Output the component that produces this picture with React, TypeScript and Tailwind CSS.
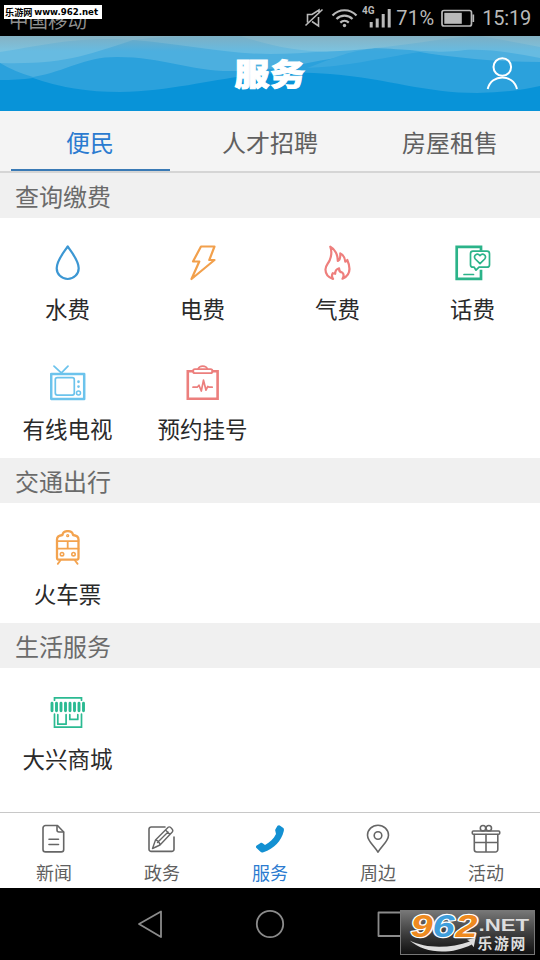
import type { ReactNode } from "react";
import clsx from "clsx";

const tabs = ["便民", "人才招聘", "房屋租售"];

type Item = { label: string; icon: ReactNode };

const sections: { title: string; items: Item[] }[] = [
  {
    title: "查询缴费",
    items: [
      { label: "水费", icon: <WaterIcon /> },
      { label: "电费", icon: <BoltIcon /> },
      { label: "气费", icon: <FlameIcon /> },
      { label: "话费", icon: <PhoneBillIcon /> },
      { label: "有线电视", icon: <TvIcon /> },
      { label: "预约挂号", icon: <ClipboardIcon /> },
    ],
  },
  { title: "交通出行", items: [{ label: "火车票", icon: <TrainIcon /> }] },
  { title: "生活服务", items: [{ label: "大兴商城", icon: <ShopIcon /> }] },
];

const navItems: Item[] = [
  { label: "新闻", icon: <NewsIcon /> },
  { label: "政务", icon: <EditIcon /> },
  { label: "服务", icon: <CallIcon /> },
  { label: "周边", icon: <PinIcon /> },
  { label: "活动", icon: <GiftIcon /> },
];

function Icon({ color, width = 1.8, children }: { color: string; width?: number; children: ReactNode }) {
  return (
    <svg
      viewBox="0.5 0.3 36 36"
      className="w-9 h-9"
      fill="none"
      stroke={color}
      strokeWidth={width}
      strokeLinejoin="round"
      strokeLinecap="round"
    >
      {children}
    </svg>
  );
}

function WaterIcon() {
  return (
    <Icon color="#3c97d3" width={2.2}>
      <path d="M18.2 1.7C15 7 7.2 15.300 7.200 23.500a11 10.800 0 0 0 22 0C29.200 15.300 21.400 7 18.200 1.700Z" />
    </Icon>
  );
}

function BoltIcon() {
  return (
    <Icon color="#f2a04c" width={2.2}>
      <path d="M16.500 1.800H30L24.800 15.300H30L7 34.300 14.800 16.800H8.500Z" />
    </Icon>
  );
}

function FlameIcon() {
  return (
    <Icon color="#ee7f7d" width={2.2}>
      <path d="M13.500 34.200C8.500 32.500 5.800 29 6 24.500c.2-4 2.600-5.300 4.400-9.500C12 11 12.200 6 10.800 2c4.700 2.300 7.600 8.200 7.500 14.300 1.900-.8 2.700-4 2.500-7.600 3.400 1.800 4.700 4.300 5 8.300.8-.2 1.400-.8 2-1.700 3.200 7.300 4.200 14.700-4.800 18.700 1.500-2.500 1.400-4.700-.2-6.200-2.200-.2-3.400-1.500-3.200-4.200-3.500 1-4 3.200-3.900 5.500l-2.500-.6c-1.100 2-.8 4 .3 5.700Z" />
    </Icon>
  );
}

function PhoneBillIcon() {
  return (
    <Icon color="#2bb389" width={1.7}>
      <path d="M26.500 6V2.200H2.200v32H26.500V25" strokeWidth="2.700" strokeLinejoin="miter" strokeLinecap="butt" />
      <path d="M9.500 29.800h9.500" />
      <path d="M18.500 6.500h14a2.500 2.500 0 0 1 2.500 2.500v11a2.500 2.500 0 0 1-2.500 2.500H24.500l-3 3-1.800-3h-1.200A2.500 2.500 0 0 1 16 20V9a2.500 2.500 0 0 1 2.500-2.500Z" fill="#fff" />
      <path d="m25.500 19-4.700-4.700c-2.600-3.300 1.800-6.700 4.700-3.300 2.900-3.400 7.300 0 4.700 3.300Z" />
    </Icon>
  );
}

function TvIcon() {
  return (
    <Icon color="#6cc3ec" width={1.7}>
      <path d="m4.500 1.500 7 6.500m7-6.500-6.300 6.500" />
      <rect x="1.700" y="9.200" width="33" height="25" strokeWidth="2.500" />
      <rect x="5.800" y="13" width="19" height="17.400" rx="2" />
      <circle cx="29" cy="28.200" r="2" strokeWidth="1.500" />
      <path d="M29 17v.1m0 4.700v.1" strokeWidth="2.700" />
    </Icon>
  );
}

function ClipboardIcon() {
  return (
    <Icon color="#ec7f7d" width={1.7}>
      <path d="M8.500 6.500H3.300v27.500h29.800V6.500h-5" strokeWidth="2.600" strokeLinejoin="miter" />
      <path d="M13.500 4.500C15 .5 21.500 .5 23 4.500" />
      <rect x="8.500" y="4.500" width="19.500" height="4" rx="2" />
      <path d="M8.500 22.500h4.200l1.800-2 2.300 5.800 2.200-10.800 2.500 10 1.800-3.800 1.400.8h3" />
    </Icon>
  );
}

function TrainIcon() {
  return (
    <Icon color="#f3a34f" width={1.8}>
      <path d="M7.500 28V9.800c0-3 1.500-4 5.500-4.500.5-5.200 10-5.200 10.500 0 4 .5 5.500 1.500 5.500 4.500V28a2 2 0 0 1-2 2H9.500a2 2 0 0 1-2-2Z" strokeWidth="2.300" />
      <path d="M8 11.400h21M8 19h21M18.200 11.800v7" />
      <circle cx="12.500" cy="24.500" r="1.700" strokeWidth="1.600" />
      <circle cx="24" cy="24.500" r="1.700" strokeWidth="1.600" />
      <circle cx="18.200" cy="6" r="1" strokeWidth="1.300" />
      <path d="m11 30.500-2.700 3.700m17-3.700 2.800 3.700" />
    </Icon>
  );
}

function ShopIcon() {
  return (
    <Icon color="#2bba92" width={1.7}>
      <path d="M5 5.500V3.200h27V5.500M5 19.500v13h27v-13" strokeLinejoin="miter" />
      <path
        d="M2.500 8.500v7.500M7 8.500v7.500M11.500 8.500v7.500M16 8.500v7.500M20.500 8.500v7.500M25 8.500v7.500M29.500 8.500v7.500M34 8.500v7.500"
        strokeWidth="2.900"
      />
      <path d="M8.300 20v9.500h8.300V20M20.300 20v4.700h8V20" />
    </Icon>
  );
}

function NavIcon({ children }: { children: ReactNode }) {
  return (
    <svg
      viewBox="0 0 30 30"
      className="w-[30px] h-[30px]"
      fill="none"
      stroke="#666"
      strokeWidth="1.600"
      strokeLinejoin="round"
      strokeLinecap="round"
    >
      {children}
    </svg>
  );
}

function NewsIcon() {
  return (
    <NavIcon>
      <path d="M18.500 1.500H6.500A2.500 2.500 0 0 0 4 4v21.400a2.500 2.500 0 0 0 2.500 2.500h15.700a2.500 2.500 0 0 0 2.500-2.500V8Z" />
      <path d="M18 1.800V6a2 2 0 0 0 2 2h4.500M10 15.300h9.500M10 20.500h9.500" />
    </NavIcon>
  );
}

function EditIcon() {
  return (
    <NavIcon>
      <path d="M18 3H4.200A2.200 2.200 0 0 0 2 5.200v20a2.200 2.200 0 0 0 2.200 2.200h20.600a2.200 2.200 0 0 0 2.200-2.200V13" />
      <path d="m5.500 24.500 3-8.500L21.200 3.200c1.500-1.200 5.700 2.300 4.300 4.500L13 21ZM8.500 16c2.500.5 4 2 4.500 5M18.500 5.900l4.500 4.500M21 8.100 10.500 18.500" strokeWidth="1.400" />
    </NavIcon>
  );
}

function CallIcon() {
  return (
    <svg viewBox="0 0 30 30" className="w-[30px] h-[30px]" fill="#1390d2">
      <path d="M22.500 1.800c1-.9 2-.9 3 .1l2.800 2.200c.7.700.8 1.500.5 2.800-2.500 10-9.500 17.700-20.400 21.300-1.500.4-2.300.2-3.200-.7l-3.700-3.500c-.8-.9-.7-1.800.2-2.600l3.500-2.200c1.100-.6 1.700-.5 2.800.3l2 1.400c5-2.400 8.600-6 11-10.800l-.6-2.800c-.4-1.200-.2-1.800.5-2.800Z" />
    </svg>
  );
}

function PinIcon() {
  return (
    <NavIcon>
      <path d="M15 28.200C11.500 22.200 4.500 17.200 4.500 11.200a10.500 10 0 0 1 21 0c0 6-7 11-10.500 17Z" />
      <circle cx="15" cy="11.500" r="3.800" />
    </NavIcon>
  );
}

function GiftIcon() {
  return (
    <NavIcon>
      <rect x="1.300" y="7" width="27.400" height="3.300" rx="1" />
      <path d="M3.300 10.500V25.500A2.500 2.500 0 0 0 5.800 28h18.500a2.500 2.500 0 0 0 2.500-2.500V10.500M3.500 18.500h23M15 10.500v17.500" />
      <circle cx="12" cy="4.200" r="2.700" />
      <circle cx="17.800" cy="4.200" r="2.700" />
    </NavIcon>
  );
}

function StatusBar() {
  return (
    <div className="relative h-9 bg-black text-[#b9b9b9] flex items-center justify-between pl-[9px] pr-[9px]">
      <span className="text-[19.500px] leading-none pt-[3px] text-[#8f8f8f]">中国移动</span>
      <div className="absolute left-1 top-[5px] w-[98px] h-[14px] bg-white text-black font-bold text-[9.200px] leading-[14px] whitespace-nowrap pl-px flex justify-between pr-[4px]">
        <span>乐游网</span>
        <span className="font-['DejaVu_Sans'] text-[8.600px]">www.962.net</span>
      </div>
      <div className="flex items-center font-['Roboto'] text-[20px] leading-9">
        <svg viewBox="0 0 90 36" className="w-[90px] h-9" fill="none" stroke="#b9b9b9" strokeWidth="1.600">
          <path d="m21.500 9.500-17 16M6.500 22.500v-8h4.500l7-4.500v3.500M11 21.500l6.500 4.500V17" />
          <path d="M31.500 15.500c6.500-7 17.500-7 24 0M35.500 19c4.500-4.500 11.500-4.500 16 0M39.300 22.600c2.500-2.300 6-2.300 8.500 0" strokeWidth="2.200" />
          <circle cx="43.500" cy="25.500" r="1.700" fill="#b9b9b9" stroke="none" />
          <path d="M70.200 22v5.500M76.200 18.500v9M82.200 14v13.500M88.200 9v18.500" strokeWidth="3" />
          <text x="61" y="13.500" fontSize="10" fontWeight="bold" fontFamily="Roboto" fill="#b9b9b9" stroke="none">
            4G
          </text>
        </svg>
        <span className="ml-[5px] w-[39px] tracking-[0.400px]">71%</span>
        <svg viewBox="0 0 34 18" className="w-[34px] h-[18px] ml-[6px]" fill="none" stroke="#b9b9b9" strokeWidth="1.700">
          <rect x="1" y="1.500" width="29.500" height="15.500" rx="2" />
          <rect x="3.300" y="3.800" width="17.500" height="11" fill="#b9b9b9" stroke="none" />
          <path d="M32.300 5.500v7.500" />
        </svg>
        <span className="ml-[7px] tracking-[-0.200px]">15:19</span>
      </div>
    </div>
  );
}

function Header() {
  return (
    <header className="relative h-[75px] bg-[#0893d8] flex items-center justify-center">
      <svg viewBox="0 0 540 75" className="absolute inset-0 w-full h-full">
        <defs>
          <linearGradient id="shade" x1="0" y1="0" x2="0" y2="1">
            <stop offset="0" stopColor="#8ba6b0" stopOpacity=".6" />
            <stop offset="1" stopColor="#8ba6b0" stopOpacity="0" />
          </linearGradient>
        </defs>
        <path d="M0 0V44Q18 44 33 42Q72 56 120 56C170 55 210 44 245 40C275 36 305 36 330 38C390 43 425 57 477 57Q515 56 540 50V0Z" fill="#2ba1dc" />
        <path d="M0 0V27Q15 36 33 41C68 35 83 21 117 21C165 21 190 36 235 35C275 35 300 28 330 23C370 16 390 13 420 16C455 22 500 26 540 26V0Z" fill="#4cafdf" />
        <path d="M307 32C335 22 350 13 385 12C400 12 410 14 420 16C375 23 350 30 307 32Z" fill="#3ba8de" />
        <path d="M0 0V27C65 29 90 18 133 4C185 8 225 18 270 18C310 18 340 13 375 12C420 14 440 18 465 14C490 13 515 17 540 22V0Z" fill="#67bbe1" />
        <path d="M0 0V16C35 11 60 3 115 3L133 4C170 -1 210 0 240 0C275 11 305 17 340 15C390 12 425 5 470 0Z" fill="#7cc3e0" />
        <path d="M480 0Q515 6 540 11V0Z" fill="#7cc3e0" />
        <rect width="540" height="15" fill="url(#shade)" />
      </svg>
      <h1 className="relative text-white font-black text-[35px] leading-none tracking-[0.500px] scale-y-[.86] -translate-y-[2px] [-webkit-text-stroke:1.100px_white]">
        服务
      </h1>
      <svg
        viewBox="0 0 34 36"
        className="absolute right-5 top-5 w-[34px] h-9"
        fill="none"
        stroke="#fff"
        strokeWidth="2"
      >
        <circle cx="16.300" cy="11" r="8.800" />
        <path d="M1.700 33C5.500 17.500 27 17.500 31 33" />
      </svg>
    </header>
  );
}

function ServiceSection({ title, items }: { title: string; items: Item[] }) {
  return (
    <section>
      <h2 className="h-[45px] leading-[45px] pl-[15px] bg-[#f0f0f0] text-[24px] text-[#6b6b6b]">{title}</h2>
      <div className="grid grid-cols-4">
        {items.map((item) => (
          <div key={item.label} className="h-[120px] pt-[27px] flex flex-col items-center">
            {item.icon}
            <span className="mt-[10px] text-[22.500px] leading-[34px] text-[#2a2a2a]">{item.label}</span>
          </div>
        ))}
      </div>
    </section>
  );
}

function SystemBar() {
  return (
    <div className="relative h-[72px] bg-black">
      <svg viewBox="0 0 540 72" className="w-full h-full" fill="none" stroke="#8b8b8b" strokeWidth="1.800" strokeLinejoin="round">
        <path d="M139 36 161 23.500v25.500Z" />
        <circle cx="270" cy="36" r="13.200" />
        <rect x="378.500" y="24.500" width="24" height="23.500" />
      </svg>
      <div className="absolute left-[400px] top-[22px] w-[135px] h-[45px] border border-[#777] bg-linear-to-b from-[#777] to-[#111]">
        <svg viewBox="400 910 135 45" className="w-full h-full">
          <g fontFamily="Liberation Sans" fontWeight="bold" fontStyle="italic" fontSize="32" strokeLinejoin="round" paintOrder="stroke">
            <text x="408" y="937" textLength="23" lengthAdjust="spacingAndGlyphs" fill="#ee8a20" stroke="#fff" strokeWidth="2.500">
              9
            </text>
            <text x="431" y="937" textLength="23" lengthAdjust="spacingAndGlyphs" fill="#3f9edb" stroke="#fff" strokeWidth="2.500">
              6
            </text>
            <text x="455" y="937" textLength="23" lengthAdjust="spacingAndGlyphs" fill="#ee8a20" stroke="#fff" strokeWidth="2.500">
              2
            </text>
          </g>
          <path d="M407 941C425 950 450 949 470 942L467 940 476 938 474 948 472 945C450 956 423 955 407 941Z" fill="#ddd" />
          <text x="479" y="931" textLength="53" lengthAdjust="spacingAndGlyphs" fontFamily="Liberation Sans" fontWeight="bold" fontSize="18" fill="#ddd">
            .NET
          </text>
          <text x="478" y="949.500" textLength="50" fontFamily="Noto Sans CJK SC" fontWeight="bold" fontSize="15.500" fill="#ddd">
            乐游网
          </text>
        </svg>
      </div>
    </div>
  );
}

export default function App() {
  return (
    <div className="w-[540px] h-[960px] flex flex-col overflow-hidden bg-white font-['Noto_Sans_CJK_SC',sans-serif]">
      <StatusBar />
      <Header />
      <nav className="h-[62px] shrink-0 bg-[#f4f4f4] border-b-2 border-[#d5d5d5] grid grid-cols-3">
        {tabs.map((tab, i) => (
          <div key={tab} className="flex justify-center">
            <span
              className={clsx(
                "h-[60px] leading-[62px] text-[24px] text-center",
                i === 0 ? "w-[159px] text-[#2b7bd0] border-b-2 border-[#3a7ab5]" : "text-[#606060]"
              )}
            >
              {tab}
            </span>
          </div>
        ))}
      </nav>
      <main className="flex-1">
        {sections.map((section) => (
          <ServiceSection key={section.title} {...section} />
        ))}
      </main>
      <nav className="h-[76px] shrink-0 border-t border-[#c8c8c8] grid grid-cols-5">
        {navItems.map((item, i) => (
          <div key={item.label} className="flex flex-col items-center pt-[11px]">
            {item.icon}
            <span className={clsx("mt-1 text-[18px] leading-[28px]", i === 2 ? "text-[#2b7bd0]" : "text-[#606060]")}>
              {item.label}
            </span>
          </div>
        ))}
      </nav>
      <SystemBar />
    </div>
  );
}
